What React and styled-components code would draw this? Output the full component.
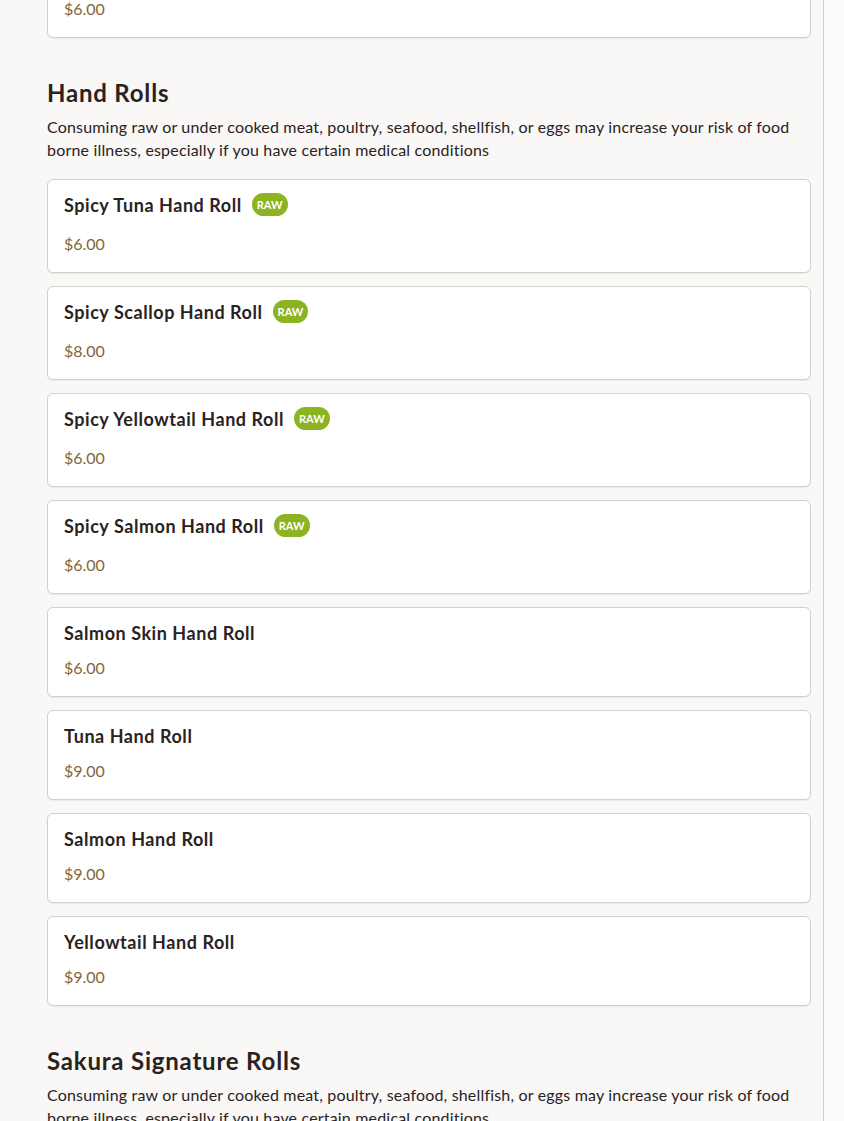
import React from 'react';
import styled, { createGlobalStyle } from 'styled-components';

const GlobalStyle = createGlobalStyle`
  html, body {
    margin: 0;
    padding: 0;
    background: #f9f8f6;
    overflow: hidden;
  }
  * { box-sizing: border-box; }
`;

const RAW_NOTE =
  'Consuming raw or under cooked meat, poultry, seafood, shellfish, or eggs may increase your risk of food borne illness, especially if you have certain medical conditions';

const sections = [
  {
    title: null,
    items: [{ name: 'Spicy Crab Hand Roll', price: '$6.00', raw: false }],
  },
  {
    title: 'Hand Rolls',
    note: RAW_NOTE,
    items: [
      { name: 'Spicy Tuna Hand Roll', price: '$6.00', raw: true },
      { name: 'Spicy Scallop Hand Roll', price: '$8.00', raw: true },
      { name: 'Spicy Yellowtail Hand Roll', price: '$6.00', raw: true },
      { name: 'Spicy Salmon Hand Roll', price: '$6.00', raw: true },
      { name: 'Salmon Skin Hand Roll', price: '$6.00', raw: false },
      { name: 'Tuna Hand Roll', price: '$9.00', raw: false },
      { name: 'Salmon Hand Roll', price: '$9.00', raw: false },
      { name: 'Yellowtail Hand Roll', price: '$9.00', raw: false },
    ],
  },
  {
    title: 'Sakura Signature Rolls',
    note: RAW_NOTE,
    items: [{ name: 'Sakura Roll', price: '$14.00', raw: true }],
  },
];

export default function App() {
  return (
    <>
      <GlobalStyle />
      <Page>
        <Menu>
          {sections.map((section, i) => (
            <Section key={i}>
              {section.title && (
                <>
                  <SectionTitle>{section.title}</SectionTitle>
                  <SectionNote>{section.note}</SectionNote>
                </>
              )}
              <ItemList>
                {section.items.map((item) => (
                  <ItemCard key={item.name}>
                    <TitleRow $raw={item.raw}>
                      <ItemName>{item.name}</ItemName>
                      {item.raw && <RawBadge>RAW</RawBadge>}
                    </TitleRow>
                    <Price>{item.price}</Price>
                  </ItemCard>
                ))}
              </ItemList>
            </Section>
          ))}
        </Menu>
      </Page>
    </>
  );
}

const Page = styled.div`
  width: 844px;
  height: 1121px;
  overflow: hidden;
  background: #fbfbfa;
`;

// page is scrolled: the end of the previous section sits above the fold
const Menu = styled.main`
  width: 824px;
  margin-top: -52px;
  padding: 0 12px 0 47px;
  background: #f9f8f6;
  border-right: 1px solid #d3d1ce;
  display: flex;
  flex-direction: column;
  gap: 40px;
  font-family: Lato, 'Open Sans', sans-serif;
  color: #2a221f;
`;

const Section = styled.section`
  display: flex;
  flex-direction: column;
`;

const SectionTitle = styled.h2`
  margin: 0;
  font-size: 24px;
  line-height: 30px;
  font-weight: 700;
  letter-spacing: 0.8px;
  color: #2a221f;
`;

const SectionNote = styled.p`
  margin: 7px 0 18px;
  font-size: 16px;
  line-height: 23px;
  letter-spacing: 0.18px;
  color: #2a221f;
`;

const ItemList = styled.div`
  display: flex;
  flex-direction: column;
  gap: 13px;
`;

const ItemCard = styled.div`
  background: #ffffff;
  border: 1px solid #d2d0cd;
  border-radius: 6px;
  padding: 14px 16px 18px;
  box-shadow: 0 1px 1px rgba(0, 0, 0, 0.06);
`;

const TitleRow = styled.div`
  display: flex;
  align-items: flex-start;
  gap: 10px;
  min-height: ${(p) => (p.$raw ? '26px' : '22px')};
`;

const ItemName = styled.h3`
  margin: 0;
  font-size: 18px;
  line-height: 22px;
  font-weight: 700;
  letter-spacing: 0.55px;
  color: #2a221f;
`;

const RawBadge = styled.span`
  height: 23px;
  padding: 0 5px;
  border-radius: 12px;
  background: #8cb321;
  color: #ffffff;
  font-size: 11px;
  font-weight: 700;
  display: inline-flex;
  align-items: center;
  margin-top: -1px;
`;

const Price = styled.div`
  margin-top: 14px;
  font-size: 16px;
  line-height: 20px;
  color: #85663a;
`;
